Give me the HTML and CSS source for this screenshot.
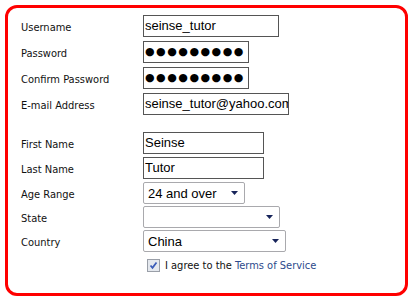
FILE: index.html
```html
<!DOCTYPE html>
<html lang="en">
<head>
    <meta charset="UTF-8">
    <title>Sign Up</title>
    <link rel="stylesheet" href="styles.css">
</head>
<body>
    <div class="box">
        <div class="group">
            <div class="row"><span class="label">Username</span><span class="field w-user">seinse_tutor</span></div>
            <div class="row"><span class="label">Password</span><span class="field w-pass dots">●●●●●●●●●</span></div>
            <div class="row"><span class="label">Confirm Password</span><span class="field w-pass dots">●●●●●●●●●</span></div>
            <div class="row"><span class="label">E-mail Address</span><span class="field w-mail">seinse_tutor@yahoo.com</span></div>
        </div>
        <div class="group second">
            <div class="row"><span class="label">First Name</span><span class="field w-name">Seinse</span></div>
            <div class="row pad1"><span class="label">Last Name</span><span class="field w-name">Tutor</span></div>
            <div class="row pad1">
                <span class="label">Age Range</span>
                <span class="select w-age"><span>24 and over</span><svg width="7" height="4" viewBox="0 0 7 4"><path d="M0 0h7L3.5 4z" fill="#17245a"/></svg></span>
            </div>
            <div class="row">
                <span class="label">State</span>
                <span class="select w-state"><span></span><svg width="7" height="4" viewBox="0 0 7 4"><path d="M0 0h7L3.5 4z" fill="#17245a"/></svg></span>
            </div>
            <div class="row">
                <span class="label">Country</span>
                <span class="select w-country"><span>China</span><svg width="7" height="4" viewBox="0 0 7 4"><path d="M0 0h7L3.5 4z" fill="#17245a"/></svg></span>
            </div>
        </div>
        <div class="agree">
            <span class="check"><svg width="11" height="11" viewBox="0 0 11 11"><path d="M2.5 5.5l2 2.3L8.5 2.5" fill="none" stroke="#3b5cb8" stroke-width="1.8"/></svg></span>
            <span>I agree to the <a href="#">Terms of Service</a></span>
        </div>
    </div>
</body>
</html>
```
FILE: styles.css
```css
*{
    margin: 0;
    padding: 0;
    box-sizing: border-box;
}
body{
    background: #ffffff;
    font-family: "DejaVu Sans Condensed", "DejaVu Sans", sans-serif;
    font-size: 11px;
    color: #111111;
}
.box{
    margin: 5px;
    width: 403px;
    height: 291px;
    border: 3px solid #ff0000;
    border-radius: 12px;
    padding: 7px 0 0 13px;
}
.group{
    display: flex;
    flex-direction: column;
    gap: 4px;
}
.second{
    margin-top: 17px;
    gap: 2px;
}
.pad1{
    margin-top: 1px;
}
.row{
    display: flex;
    height: 22px;
}
.label{
    width: 122px;
    padding-top: 6px;
    line-height: 13px;
}
.field{
    height: 22px;
    border: 1px solid #555555;
    padding: 0 2px 0 1px;
    font-family: "Liberation Sans", Arial, sans-serif;
    font-size: 13px;
    line-height: 20px;
    color: #000000;
    white-space: nowrap;
    overflow: hidden;
}
.dots{
    font-family: "DejaVu Sans", sans-serif;
    font-size: 11px;
    letter-spacing: 1.5px;
}
.w-user{ width: 136px; }
.w-pass{ width: 106px; }
.w-mail{ width: 146px; }
.w-name{ width: 121px; }
.select{
    height: 22px;
    display: flex;
    align-items: center;
    justify-content: space-between;
    border: 1px solid #a9a9ad;
    border-radius: 2px;
    padding: 0 6px 0 4px;
    font-family: "Liberation Sans", Arial, sans-serif;
    font-size: 13px;
    color: #000000;
}
.w-age{ width: 102px; }
.w-state{ width: 137px; }
.w-country{ width: 143px; }
.agree{
    display: flex;
    align-items: center;
    gap: 5px;
    margin: 7px 0 0 126px;
    line-height: 13px;
}
.check{
    width: 13px;
    height: 13px;
    border: 1px solid #9a9fa8;
    background: #e4e8ee;
    display: flex;
    align-items: center;
    justify-content: center;
}
.agree a{
    color: #2d4a8c;
    text-decoration: none;
}
```
